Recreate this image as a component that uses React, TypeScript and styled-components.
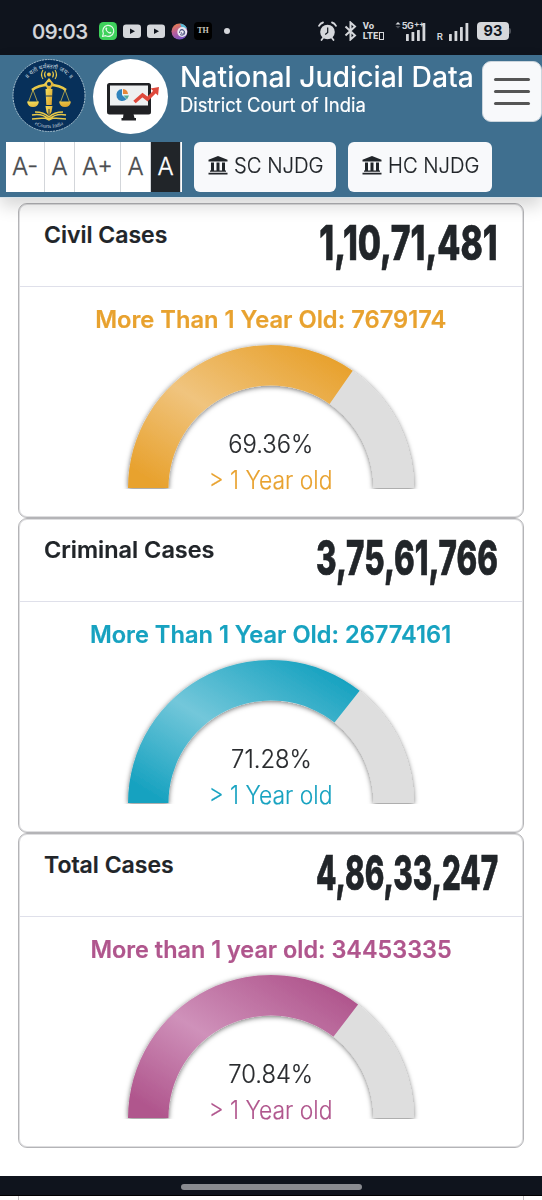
import styled, { createGlobalStyle } from "styled-components";

const fontStack = `Inter, "Liberation Sans", sans-serif`;

const GlobalStyle = createGlobalStyle`
  * {
    box-sizing: border-box;
  }

  body {
    margin: 0;
    background: #fff;
    color: #212529;
    font-family: ${fontStack};
  }
`;

// Text stretched or squeezed horizontally, anchored to one side.
const Text = styled.span<{
  $size: number;
  $weight?: number;
  $stretch?: number;
  $anchor?: string;
  $color?: string;
}>`
  display: block;
  white-space: nowrap;
  font-size: ${(p) => p.$size}px;
  font-weight: ${(p) => p.$weight ?? 400};
  color: ${(p) => p.$color ?? "inherit"};
  transform: scaleX(${(p) => p.$stretch ?? 1});
  transform-origin: ${(p) => p.$anchor ?? "left"} center;
`;

const LightText = styled(Text)`
  -webkit-text-stroke: 0.2px currentColor;
`;

const Screen = styled.div`
  display: flex;
  flex-direction: column;
  width: 542px;
  height: 1200px;
  overflow: hidden;
`;

const StatusBar = styled.div`
  display: flex;
  flex: none;
  justify-content: space-between;
  height: 55px;
  padding: 7px 31px 0 32px;
  background: #0f141d;
  color: #d5d7db;
`;

const StatusGroup = styled.div`
  display: flex;
  align-items: center;
`;

const Clock = styled.div`
  width: 67px;
  font-size: 20.5px;
  font-weight: 500;
  letter-spacing: -0.6px;
  -webkit-text-stroke: 0.2px #d5d7db;
`;

const Header = styled.header`
  position: relative;
  z-index: 1;
  flex: none;
  height: 143px;
  background: #3f6f8f;
  border-bottom: 1px solid #d7e2e8;
  box-shadow: 0 8px 16px rgba(0, 0, 0, 0.16);
`;

const Brand = styled.div`
  display: flex;
  height: 87px;
  padding: 4px 0 0 12px;
`;

const Titles = styled.div`
  flex: 1;
  width: 0;
  padding-left: 12px;
  color: #fff;
  line-height: 1;
`;

const Title = styled(Text)`
  height: 36px;
  line-height: 35px;
`;

const Subtitle = styled(Text)`
  height: 22px;
  line-height: 21px;
  -webkit-text-stroke: 0.2px currentColor;
`;

const MenuButton = styled.button`
  display: flex;
  flex: none;
  flex-direction: column;
  align-items: center;
  justify-content: center;
  gap: 9px;
  width: 60px;
  height: 61px;
  margin-top: 2px;
  padding: 0;
  background: #f8f9fb;
  border: 1px solid #cbd5dd;
  border-radius: 9px;
`;

const MenuLine = styled.span`
  width: 36px;
  height: 3px;
  background: #555;
  border-radius: 2px;
`;

const Toolbar = styled.div`
  display: flex;
  height: 50px;
  padding-left: 6px;
`;

const FontSizes = styled.div`
  display: flex;
  width: 176px;
  margin-right: 12px;
  background: #fff;
`;

const SizeButton = styled.button<{ $width: number; $dark?: boolean }>`
  width: ${(p) => p.$width}px;
  padding: 0 0 2px;
  background: ${(p) => (p.$dark ? "#212529" : "#fff")};
  border: 0;
  border-right: 1px solid #d3d6da;
  color: ${(p) => (p.$dark ? "#fff" : "#4b4d50")};
  font: 300 24px ${fontStack};
  -webkit-text-stroke: 0.3px currentColor;
`;

const CourtButton = styled.button<{ $width: number }>`
  display: flex;
  align-items: center;
  gap: 6px;
  width: ${(p) => p.$width}px;
  margin-right: 12px;
  padding: 0 0 4px 14px;
  background: #f8f9fb;
  border: 0;
  border-radius: 6px;
  color: #212529;
  font-family: ${fontStack};
`;

const Content = styled.main`
  flex: none;
  height: 978px;
  padding: 5px 18px 0;
`;

const Card = styled.section`
  width: 506px;
  height: 315px;
  padding: 1px;
  background: #fff;
  border: 1px solid #b4b4b7;
  border-radius: 9px;
  box-shadow: inset 0 0 0 1px #dedee0;
`;

const CardHeader = styled.div`
  display: flex;
  justify-content: space-between;
  height: 82px;
  padding: 14px 24px 0;
  border-bottom: 1px solid #dfe0ea;
`;

const CardTitle = styled(Text)`
  height: 32px;
  line-height: 32px;
  -webkit-text-stroke: 0.2px currentColor;
`;

const Count = styled(Text)`
  height: 50px;
  line-height: 48px;
  -webkit-text-stroke: 0.7px #212529;
`;

const CardBody = styled.div`
  display: flex;
  flex-direction: column;
  align-items: center;
`;

const Summary = styled(Text)`
  height: 52px;
  padding-top: 18px;
  line-height: 30px;
  -webkit-text-stroke: 0.2px currentColor;
`;

const GaugeBox = styled.div`
  position: relative;
  width: 320px;
  height: 160px;
`;

const GaugeLabel = styled.div`
  position: absolute;
  top: 87px;
  left: 0;
  display: flex;
  flex-direction: column;
  align-items: center;
  width: 100%;
  line-height: 36px;
`;

const HomeBar = styled.div`
  display: flex;
  flex: none;
  align-items: center;
  justify-content: center;
  height: 20px;
  background: #0f141d;
  border-bottom: 1px solid #000;
`;

const HomeHandle = styled.div`
  width: 181px;
  height: 6px;
  margin-top: 2px;
  background: #898b90;
  border-radius: 3px;
`;

const NextCard = styled.div`
  flex: none;
  height: 4px;
  margin: 0 18px;
  border: solid #c5c3c6;
  border-width: 0 1px;
`;

const WhatsApp = () => (
  <svg width="18" height="18" viewBox="0 0 18 18">
    <rect width="18" height="18" rx="4.5" fill="#3ed15b" />
    <path
      d="M3.500 14.500l.9-3.100A5.500 5.500 0 1 1 6.600 13.700z"
      fill="none"
      stroke="#e4f7e7"
      strokeWidth="1.200"
      strokeLinejoin="round"
    />
    <path
      d="M6.700 5.800c-.9 1 0 2.900 1.500 4.300 1.600 1.500 3 2 4 1.100.6-.5.300-.9-.8-1.500-.6-.3-.8.6-1.300.4-1-.4-1.800-1.200-2.200-2.100-.2-.5.600-.7.400-1.200-.4-1.100-.8-1.800-1.600-1z"
      fill="#e4f7e7"
    />
  </svg>
);

const YouTube = () => (
  <svg width="18" height="18" viewBox="0 0 18 18">
    <rect y="2.500" width="18" height="13.500" rx="3" fill="#d5d7db" />
    <path d="M7 6.500l5 2.800-5 2.700z" fill="#0f141d" />
  </svg>
);

const Swirl = () => (
  <svg width="17" height="17" viewBox="0 0 17 17">
    <defs>
      <linearGradient id="swirl" x1="0.2" y1="0" x2="0.6" y2="1">
        <stop offset="0" stopColor="#ec8149" />
        <stop offset="0.5" stopColor="#b75d9b" />
        <stop offset="1" stopColor="#7655c5" />
      </linearGradient>
    </defs>
    <circle cx="8.500" cy="8.500" r="8" fill="url(#swirl)" />
    <path d="M9 .5a8 8 0 0 1 7 5l-5 0z" fill="#58b9d5" />
    <circle cx="11.200" cy="9" r="4.900" fill="#eceaf3" />
    <path
      d="M8.500 10c0-5 6-3 4.500 0-1 2-4 1-2.500-.8M8.800 7.500c3-3 6 1 4.500 4M9 11.500c2 1.500 4 .5 4.500-1"
      fill="none"
      stroke="#454a7c"
      strokeWidth="0.9"
    />
  </svg>
);

const AppBadge = styled.div`
  width: 18px;
  height: 18px;
  background: #000;
  border-radius: 4px;
  color: #c8c5bd;
  font: 700 8px/18px "Liberation Serif", serif;
  text-align: center;
`;

const NotificationDot = styled.div`
  width: 6px;
  height: 6px;
  margin-left: 6px;
  background: #d5d7db;
  border-radius: 50%;
`;

const Notifications = styled(StatusGroup)`
  gap: 6px;
`;

const Alarm = () => (
  <svg width="19" height="20" viewBox="0 0 19 20">
    <circle cx="9.500" cy="11" r="7.300" fill="#d5d7db" />
    <path
      d="M1 4.800Q2.500 2 5 1.500M18 4.800Q16.500 2 14 1.500M5 17l-1.500 2M14 17l1.500 2"
      fill="none"
      stroke="#d5d7db"
      strokeWidth="1.800"
      strokeLinecap="round"
    />
    <path d="M9.700 6.500v5l-2.500 2" fill="none" stroke="#0f141d" strokeWidth="1.200" />
  </svg>
);

const BluetoothIcon = styled.svg`
  margin-left: 7px;
`;

const Bluetooth = () => (
  <BluetoothIcon width="13" height="20" viewBox="0 0 13 20">
    <path
      d="M1.500 5.500l9.500 9-4.500 4V1.500l4.500 4-9.500 9"
      fill="none"
      stroke="#d5d7db"
      strokeWidth="2"
    />
  </BluetoothIcon>
);

const VoLte = styled.div`
  display: flex;
  flex-direction: column;
  width: 24px;
  margin: 0 8px 0 6px;
  font: 800 9.5px/10px Roboto, sans-serif;
`;

const VoLteLine = styled.span`
  display: flex;
  align-items: center;
  height: 10px;
`;

const SimTwo = styled.span`
  width: 5px;
  height: 8px;
  margin-left: 1px;
  border: 1.5px solid #d5d7db;
`;

const NetworkSignal = styled.div`
  position: relative;
  display: flex;
  width: 31px;
  justify-content: flex-end;
`;

const NetworkType = styled.span`
  position: absolute;
  top: -1px;
  left: 0;
  display: flex;
  gap: 1px;
  font-size: 9px;
  font-weight: 700;
  letter-spacing: -0.6px;
  line-height: 9px;
  white-space: nowrap;
`;

const Plus = styled.sup`
  font-size: 8px;
  line-height: 6px;
`;

const Arrows = () => (
  <svg width="6" height="8" viewBox="0 0 6 8">
    <path d="M.5 3.500L3 1l2.500 2.500z" fill="#d5d7db" />
    <path d="M.5 5L3 7.500 5.500 5z" fill="#4c5058" />
  </svg>
);

const Signal = ({ heights }: { heights: number[] }) => (
  <svg width="20" height="19" viewBox="0 0 20 19">
    {heights.map((h, i) => (
      <rect key={i} x={i * 5.5} y={19 - h} width="2.800" height={h} rx="0.500" fill="#d5d7db" />
    ))}
  </svg>
);

const Roaming = styled.span`
  margin: 10px 6px 0 11px;
  font-size: 9.5px;
  font-weight: 600;
`;

const Battery = styled.div`
  width: 32px;
  height: 18px;
  margin-left: 8px;
  background: #d5d7db;
  border-radius: 4px;
  color: #0f141d;
  font-size: 14.5px;
  font-weight: 700;
  line-height: 18px;
  text-align: center;
`;

const BatteryTip = styled.div`
  width: 2px;
  height: 6px;
  background: #4c5058;
  border-radius: 0 2px 2px 0;
`;

const Emblem = () => (
  <svg width="74" height="74" viewBox="0 0 74 74">
    <defs>
      <linearGradient id="gold" x1="0" y1="0" x2="1" y2="1">
        <stop offset="0" stopColor="#f5e05e" />
        <stop offset="1" stopColor="#d99d28" />
      </linearGradient>
      <path id="motto" d="M9.500 37a27.500 27.500 0 0 1 55 0" />
      <path id="name" d="M5 37a32 32 0 0 0 64 0" />
    </defs>
    <circle cx="37" cy="36.500" r="36" fill="#07305a" />
    <circle
      cx="37"
      cy="36.500"
      r="36"
      fill="none"
      stroke="#b6cbd6"
      strokeWidth="0.900"
      strokeDasharray="2 0.800"
    />
    <g fill="none" stroke="#e8c848">
      <path
        d="M33.500 12.500q-2 3 0 6M31 11q-3 4.500 0 9M40.500 12.500q2 3 0 6M43 11q3 4.500 0 9"
        strokeWidth="1.100"
      />
      <path d="M20 31q6-5 17-5 11 0 17 5" strokeWidth="2.500" />
      <path d="M21 31l-4.500 12M21 31l4.500 12M53 31l-4.500 12M53 31l4.500 12" strokeWidth="0.700" />
      <path
        d="M20 60l13-1 4 2 4-2 13 1M20 56q10-2 17 4 7-6 17-4M23 53q9 0 14 5 5-5 14-5"
        strokeWidth="1.500"
      />
    </g>
    <g fill="url(#gold)">
      <circle cx="37" cy="15.500" r="2" />
      <path d="M37 19l5 6-2.500 3-1 4h-3l-1-4L32 25z" />
      <path d="M33.500 30h7l-.8 16h-5.400z" />
      <path d="M33.500 47h7l-1 6-2.500 4-2.500-4z" />
      <path d="M15 42.500h12q-1 5.500-6 5.500t-6-5.500zM47 42.500h12q-1 5.500-6 5.500t-6-5.500z" />
    </g>
    <circle cx="37" cy="25" r="2" fill="#07305a" />
    <path d="M34 37h6M34 46.500h6M37 50v6" stroke="#07305a" strokeWidth="0.900" />
    <text fill="#c6d5df" fontSize="6" fontFamily="'Noto Sans', sans-serif">
      <textPath href="#motto" startOffset="50%" textAnchor="middle">
        ॥ यतो धर्मस्ततो जय: ॥
      </textPath>
    </text>
    <text fill="#c6d5df" fontSize="5.500" fontFamily="Liberation Serif, serif">
      <textPath href="#name" startOffset="50%" textAnchor="middle">
        eCourts India
      </textPath>
    </text>
  </svg>
);

const DashboardLogo = styled.div`
  flex: none;
  width: 75px;
  height: 75px;
  margin-left: 7px;
  background: #fff;
  border-radius: 50%;
`;

const Monitor = () => (
  <svg width="75" height="75" viewBox="0 0 75 75">
    <rect x="14" y="24" width="44" height="31.500" rx="2.500" fill="#202124" />
    <rect x="17" y="26.500" width="38" height="20" fill="#eef0f1" />
    <path d="M30.500 55h10l1 4h1.500v2.500H28.500V59h1.500z" fill="#202124" />
    <path d="M29 36v-6a6 6 0 1 0 4.500 10.300z" fill="#2f83bd" />
    <path d="M30 35v-5a5.500 5.500 0 0 1 5 5z" fill="#e7873a" />
    <path d="M30.500 36.500H36l-2 4z" fill="#50ab9c" />
    <path d="M41.500 43l8-7 5 4 8-8" fill="none" stroke="#df493c" strokeWidth="3.600" />
    <path d="M57.500 29.500l8.500-1.500-1 8.500z" fill="#df493c" />
  </svg>
);

const Courthouse = () => (
  <svg width="20" height="19" viewBox="0 0 20 19">
    <path
      d="M10 0l9.500 3.700v1.800H.5V3.700zM3 6.500h3v8H3zM8.500 6.500h3v8h-3zM14 6.500h3v8h-3zM2 14.500h16v1.300H2zM.5 16.700h19v1.800H.5z"
      fill="#212529"
    />
  </svg>
);

const CX = 160;
const CY = 149;
const OUTER = 143;
const INNER = 102.5;

const point = (r: number, share: number) => {
  const angle = Math.PI * (1 - share);
  return `${CX + r * Math.cos(angle)} ${CY - r * Math.sin(angle)}`;
};

const arc = (from: number, to: number) =>
  `M${point(OUTER, from)}A${OUTER} ${OUTER} 0 0 1 ${point(OUTER, to)}` +
  `L${point(INNER, to)}A${INNER} ${INNER} 0 0 0 ${point(INNER, from)}Z`;

type CaseStats = {
  id: string;
  title: string;
  titleStretch: number;
  count: string;
  countStretch: number;
  summary: string;
  summaryStretch: number;
  percent: number;
  color: string;
  light: string;
};

const Gauge = ({ id, percent, color, light }: CaseStats) => (
  <GaugeBox>
    <svg width="320" height="150" viewBox="0 0 320 150">
      <defs>
        <linearGradient id={id} x1="0" y1="1" x2="1" y2="0">
          <stop offset="0.080" stopColor={color} />
          <stop offset="0.460" stopColor={light} />
          <stop offset="0.900" stopColor={color} />
        </linearGradient>
        <filter id={`${id}-shadow`} x="-10%" y="-10%" width="120%" height="120%">
          <feDropShadow dx="0" dy="1" stdDeviation="2.800" floodOpacity="0.550" />
        </filter>
      </defs>
      <g filter={`url(#${id}-shadow)`}>
        <path d={arc(0, 1)} fill="#dedede" />
        <path d={arc(0, percent / 100)} fill={`url(#${id})`} />
      </g>
    </svg>
    <GaugeLabel>
      <LightText $size={25} $weight={300} $stretch={0.95} $anchor="center" $color="#292b2e">
        {percent.toFixed(2)}%
      </LightText>
      <LightText $size={25} $weight={300} $stretch={0.915} $anchor="center" $color={color}>
        &gt; 1 Year old
      </LightText>
    </GaugeLabel>
  </GaugeBox>
);

const cases: CaseStats[] = [
  {
    id: "civil",
    title: "Civil Cases",
    titleStretch: 1,
    count: "1,10,71,481",
    countStretch: 0.7,
    summary: "More Than 1 Year Old: 7679174",
    summaryStretch: 0.988,
    percent: 69.36,
    color: "#e8a22f",
    light: "#f0c47e",
  },
  {
    id: "criminal",
    title: "Criminal Cases",
    titleStretch: 1.02,
    count: "3,75,61,766",
    countStretch: 0.652,
    summary: "More Than 1 Year Old: 26774161",
    summaryStretch: 0.984,
    percent: 71.28,
    color: "#17a2c0",
    light: "#73c7da",
  },
  {
    id: "total",
    title: "Total Cases",
    titleStretch: 1,
    count: "4,86,33,247",
    countStretch: 0.617,
    summary: "More than 1 year old: 34453335",
    summaryStretch: 0.976,
    percent: 70.84,
    color: "#b0568d",
    light: "#cf91ba",
  },
];

export default function App() {
  return (
    <Screen>
      <GlobalStyle />
      <StatusBar>
        <StatusGroup>
          <Clock>09:03</Clock>
          <Notifications>
            <WhatsApp />
            <YouTube />
            <YouTube />
            <Swirl />
            <AppBadge>TH</AppBadge>
            <NotificationDot />
          </Notifications>
        </StatusGroup>
        <StatusGroup>
          <Alarm />
          <Bluetooth />
          <VoLte>
            <VoLteLine>Vo</VoLteLine>
            <VoLteLine>
              LTE
              <SimTwo />
            </VoLteLine>
          </VoLte>
          <NetworkSignal>
            <NetworkType>
              <Arrows />
              5G<Plus>++</Plus>
            </NetworkType>
            <Signal heights={[7, 9, 11, 18]} />
          </NetworkSignal>
          <Roaming>R</Roaming>
          <Signal heights={[7, 10, 14, 18]} />
          <Battery>93</Battery>
          <BatteryTip />
        </StatusGroup>
      </StatusBar>

      <Header>
        <Brand>
          <Emblem />
          <DashboardLogo>
            <Monitor />
          </DashboardLogo>
          <Titles>
            <Title $size={29} $weight={500} $stretch={0.977}>
              National Judicial Data
            </Title>
            <Subtitle $size={19.5} $weight={400} $stretch={0.945}>
              District Court of India
            </Subtitle>
          </Titles>
          <MenuButton>
            <MenuLine />
            <MenuLine />
            <MenuLine />
          </MenuButton>
        </Brand>
        <Toolbar>
          <FontSizes>
            <SizeButton $width={39}>A-</SizeButton>
            <SizeButton $width={30}>A</SizeButton>
            <SizeButton $width={46}>A+</SizeButton>
            <SizeButton $width={30}>A</SizeButton>
            <SizeButton $width={30} $dark>
              A
            </SizeButton>
          </FontSizes>
          <CourtButton $width={142}>
            <Courthouse />
            <LightText $size={22} $weight={300} $stretch={0.92}>
              SC NJDG
            </LightText>
          </CourtButton>
          <CourtButton $width={144}>
            <Courthouse />
            <LightText $size={22} $weight={300} $stretch={0.915}>
              HC NJDG
            </LightText>
          </CourtButton>
        </Toolbar>
      </Header>

      <Content>
        {cases.map((stats) => (
          <Card key={stats.id}>
            <CardHeader>
              <CardTitle $size={23} $weight={600} $stretch={stats.titleStretch}>
                {stats.title}
              </CardTitle>
              <Count $size={48} $weight={800} $stretch={stats.countStretch} $anchor="right">
                {stats.count}
              </Count>
            </CardHeader>
            <CardBody>
              <Summary
                $size={24}
                $weight={600}
                $stretch={stats.summaryStretch}
                $anchor="center"
                $color={stats.color}
              >
                {stats.summary}
              </Summary>
              <Gauge {...stats} />
            </CardBody>
          </Card>
        ))}
      </Content>
      <HomeBar>
        <HomeHandle />
      </HomeBar>
      <NextCard />
    </Screen>
  );
}
